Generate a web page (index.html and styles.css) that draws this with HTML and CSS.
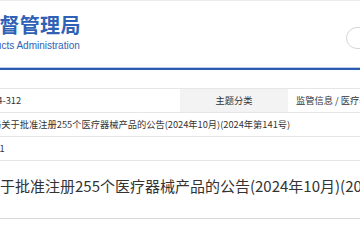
FILE: index.html
```html
<!DOCTYPE html>
<html lang="zh-CN">

<head>
    <meta charset="UTF-8">
    <meta name="viewport" content="width=device-width, initial-scale=1.0">
    <title>国家药品监督管理局</title>
    <link rel="stylesheet" href="styles.css">
</head>

<body>
    <div class="page">
        <header class="header">
            <div class="brand">
                <div class="brand-cn">国家药品监督管理局</div>
                <div class="brand-en">National Medical Products Administration</div>
            </div>
            <form class="search">
                <input type="text" class="search-input" placeholder="" />
            </form>
        </header>

        <div class="info">
            <div class="row">
                <div class="label">索引号</div>
                <div class="value">FGWJ-2024-312</div>
                <div class="label shaded">主题分类</div>
                <div class="value">监管信息 / 医疗器械注册</div>
            </div>
            <div class="row">
                <div class="label">标题</div>
                <div class="value wide">国家药监局关于批准注册255个医疗器械产品的公告(2024年10月)(2024年第141号)</div>
            </div>
            <div class="row">
                <div class="label">发布日期</div>
                <div class="value wide date">2024-11-01</div>
            </div>
        </div>

        <h1 class="title">国家药监局关于批准注册255个医疗器械产品的公告(2024年10月)(2024年第141号)</h1>
    </div>
</body>

</html>
```

FILE: styles.css
```css
body {
    margin: 0;
    background: #ffffff;
    font-family: "Noto Sans CJK SC", "Noto Sans", sans-serif;
    color: #333;
    overflow: hidden;
}

.page {
    margin-left: -102px;
    width: 1000px;
}

.header {
    display: flex;
    align-items: flex-start;
    height: 70px;
    box-sizing: border-box;
    padding-top: 13px;
    border-top: 1px solid #ececec;
    border-bottom: 2px solid #2c5cad;
    box-shadow: inset 0 -1px 0 #b9cbea;
}

.brand-cn {
    font-size: 20px;
    line-height: 22px;
    font-weight: bold;
    color: #2f62b6;
    letter-spacing: 0.3px;
}

.brand-en {
    margin-top: 4px;
    font-family: "Liberation Sans", Arial, sans-serif;
    font-size: 10px;
    line-height: 12px;
    color: #2f62b6;
}

.search {
    margin: 9px 0 0 265px;
}

.search-input {
    width: 200px;
    height: 22px;
    box-sizing: border-box;
    border: 1px solid #d6d6d6;
    border-radius: 11px;
    background: #fff;
    outline: none;
}

.info {
    margin-top: 18px;
    border-top: 1px solid #e6e6e6;
}

.row {
    display: grid;
    grid-template-columns: 47px 235px 108px 1fr;
    height: 24px;
    box-sizing: border-box;
    border-bottom: 1px solid #e6e6e6;
    font-size: 9.25px;
    line-height: 23px;
}

.label {
    text-align: center;
    white-space: nowrap;
    overflow: hidden;
}

.label.shaded {
    background: #f3f3f3;
}

.value {
    padding-left: 10px;
    white-space: nowrap;
}

.row .label.shaded + .value {
    padding-left: 8px;
}

.value.wide {
    grid-column: 2 / -1;
}

.value.date {
    letter-spacing: 0.25px;
}

.title {
    margin: 14px 0 0;
    padding: 0 0 21px 12px;
    font-size: 15px;
    line-height: 22px;
    font-weight: normal;
    color: #333;
    white-space: nowrap;
    border-bottom: 1px solid #d9d9d9;
}
```
